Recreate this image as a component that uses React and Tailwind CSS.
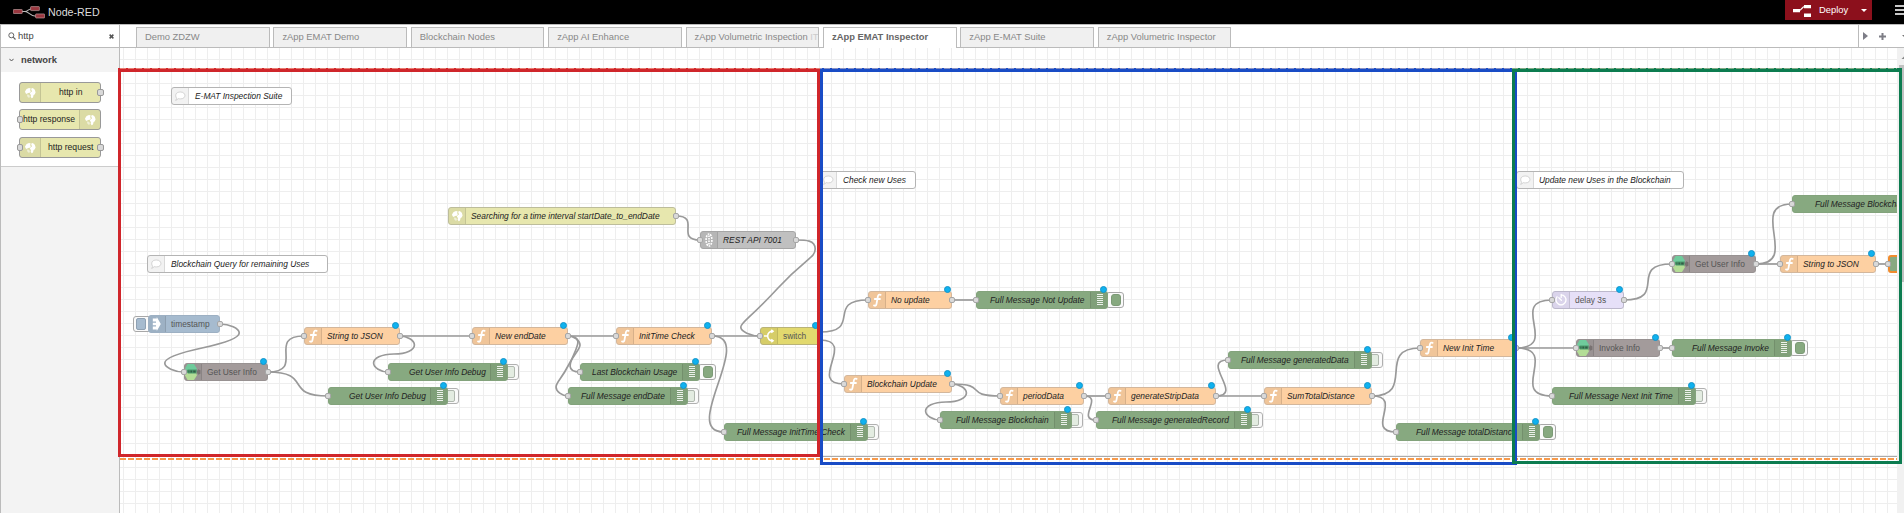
import React from "react";

const S = 0.6;
const OX = 120;
const OY = 48;

const KINDS = {
  fn: { bg: "bg-[#fdd0a2] border-[#d3b79c]", icon: "f" },
  debug: { bg: "bg-[#87a980] border-[#83a37c]", icon: "debug", right: true },
  inject: { bg: "bg-[#a6bbcf] border-[#9db0c3]", icon: "inject" },
  http: { bg: "bg-[#e7e7ae] border-[#bdbd9b]", icon: "globe" },
  rest: { bg: "bg-[#c0c0c0] border-[#a6a6a6]", icon: "burst" },
  sw: { bg: "bg-[#e2d96e] border-[#b9b377]", icon: "switch" },
  delay: { bg: "bg-[#e6e0f8] border-[#bcb8cc]", icon: "timer" },
  agent: { bg: "bg-[#a39b9b] border-[#989292]", icon: "hex" },
  comment: { bg: "bg-white border-[#b4b4b4]", icon: "comment" },
};

// kind, left, top, width, label, label left, options
const NODES = [
  ["comment", 171, 87, 121, "E-MAT Inspection Suite", 195],
  ["comment", 819, 171, 97, "Check new Uses", 843],
  ["comment", 1516, 171, 168, "Update new Uses in the Blockchain", 1539],
  ["comment", 147, 255, 181, "Blockchain Query for remaining Uses", 171],
  ["http", 448, 207, 228, "Searching for a time interval startDate_to_endDate", 471, { i: 0, o: 1 }],
  ["rest", 700, 231, 96, "REST API 7001", 723, { i: 1, o: 1 }],
  ["inject", 148, 315, 72, "timestamp", 171, { o: 1, plain: 1 }],
  ["agent", 184, 363, 84, "Get User Info", 207, { i: 1, o: 1, dot: 1, plain: 1 }],
  ["fn", 304, 327, 96, "String to JSON", 327, { i: 1, o: 1, dot: 1 }],
  ["debug", 388, 363, 120, "Get User Info Debug", 409, { i: 1, dot: 1, btn: "off" }],
  ["debug", 328, 387, 120, "Get User Info Debug", 349, { i: 1, dot: 1, btn: "off" }],
  ["fn", 472, 327, 96, "New endDate", 495, { i: 1, o: 1, dot: 1 }],
  ["fn", 616, 327, 96, "InitTime Check", 639, { i: 1, o: 1, dot: 1 }],
  ["sw", 760, 327, 60, "switch", 783, { i: 1, o: 2, dot: 1, plain: 1 }],
  ["debug", 580, 363, 120, "Last Blockchain Usage", 592, { i: 1, dot: 1, btn: "on" }],
  ["debug", 568, 387, 120, "Full Message endDate", 581, { i: 1, dot: 1, btn: "off" }],
  ["debug", 724, 423, 144, "Full Message InitTime Check", 737, { i: 1, dot: 1, btn: "off" }],
  ["fn", 868, 291, 84, "No update", 891, { i: 1, o: 1, dot: 1 }],
  ["debug", 976, 291, 132, "Full Message Not Update", 990, { i: 1, dot: 1, btn: "on" }],
  ["fn", 844, 375, 108, "Blockchain Update", 867, { i: 1, o: 1, dot: 1 }],
  ["fn", 1000, 387, 84, "periodData", 1023, { i: 1, o: 1, dot: 1 }],
  ["fn", 1108, 387, 108, "generateStripData", 1131, { i: 1, o: 1, dot: 1 }],
  ["debug", 940, 411, 132, "Full Message Blockchain", 956, { i: 1, dot: 1, btn: "off" }],
  ["debug", 1096, 411, 156, "Full Message generatedRecord", 1112, { i: 1, dot: 1, btn: "off" }],
  ["debug", 1228, 351, 144, "Full Message generatedData", 1241, { i: 1, dot: 1, btn: "off" }],
  ["fn", 1264, 387, 108, "SumTotalDistance", 1287, { i: 1, o: 1, dot: 1 }],
  ["fn", 1420, 339, 96, "New Init Time", 1443, { i: 1, o: 1, dot: 1 }],
  ["debug", 1396, 423, 144, "Full Message totalDistance", 1416, { i: 1, dot: 1, btn: "on" }],
  ["delay", 1552, 291, 72, "delay 3s", 1575, { i: 1, o: 1, dot: 1, plain: 1 }],
  ["agent", 1576, 339, 84, "Invoke Info", 1599, { i: 1, o: 1, dot: 1, plain: 1 }],
  ["debug", 1672, 339, 120, "Full Message Invoke", 1692, { i: 1, dot: 1, btn: "on" }],
  ["debug", 1552, 387, 144, "Full Message Next Init Time", 1569, { i: 1, dot: 1, btn: "off" }],
  ["agent", 1672, 255, 84, "Get User Info", 1695, { i: 1, o: 1, dot: 1, plain: 1 }],
  ["fn", 1780, 255, 96, "String to JSON", 1803, { i: 1, o: 1, dot: 1 }],
  ["debug", 1792, 195, 144, "Full Message Blockchain", 1815, { i: 1 }],
  ["debug", 1888, 255, 120, "", 1905, { i: 1, selected: 1 }],
];

const WIRES = [
  [676, 216, 700, 240],
  [796, 240, 760, 336],
  [220, 324, 184, 372],
  [268, 372, 304, 336],
  [268, 372, 328, 396],
  [400, 336, 472, 336],
  [400, 336, 388, 372],
  [568, 336, 616, 336],
  [568, 336, 580, 372],
  [568, 336, 568, 396],
  [712, 336, 760, 336],
  [712, 336, 724, 432],
  [820, 332, 868, 300],
  [820, 340, 844, 384],
  [952, 300, 976, 300],
  [952, 384, 1000, 396],
  [952, 384, 940, 420],
  [1084, 396, 1108, 396],
  [1084, 396, 1096, 420],
  [1216, 396, 1228, 360],
  [1216, 396, 1264, 396],
  [1372, 396, 1420, 348],
  [1372, 396, 1396, 432],
  [1516, 348, 1552, 300],
  [1516, 348, 1576, 348],
  [1516, 348, 1552, 396],
  [1624, 300, 1672, 264],
  [1660, 348, 1672, 348],
  [1756, 264, 1792, 204],
  [1756, 264, 1780, 264],
  [1876, 264, 1888, 264],
];

function wirePath([ax, ay, bx, by]) {
  const [x0, y0, x1, y1] = [ax, ay, bx, by].map((v) => v / S);
  const W = 100;
  const dx = x1 - x0;
  const dy = y1 - y0;
  if (dx > 0) {
    const d = Math.hypot(dx, dy);
    const k = d < W ? 0.75 - 0.75 * ((W - d) / W) : 0.75;
    return `M${x0} ${y0}C${x0 + W * k} ${y0} ${x1 - W * k} ${y1} ${x1} ${y1}`;
  }
  const k = 0.4 - 0.2 * Math.max(0, (W - Math.min(Math.abs(dx), Math.abs(dy))) / W);
  const h = 15;
  const mx = x1 - dx / 2;
  const my = y1 - dy / 2;
  const ym = (y1 + my) / 2;
  const tx = x0 + W * k;
  const ty = Math.min(ym - dy / 2, y0 + h);
  const ex = x1 - W * k;
  const ey = Math.max(ym, y1 - h);
  const cx = (x0 + tx) / 2;
  const cp = [
    [cx, y0],
    [tx, Math.max(y0, ty - h)],
    [cx, Math.min(my, ty + h)],
    [ex, Math.max(my, ey - h)],
    [(x1 + ex) / 2, y1],
  ];
  if (cp[2][1] === ty + h) {
    if (Math.abs(dy) < h * 10) cp[1][1] = ty - h / 2;
    cp[3][1] = ey - h / 2;
  }
  return `M${x0} ${y0}C${cp[0]} ${cp[1]} ${tx} ${ty}S${cp[2]} ${mx} ${my}S${cp[3]} ${ex} ${ey}S${cp[4]} ${x1} ${y1}`;
}

function Globe() {
  return (
    <g fill="#fff">
      <path d="M4 7.400 5.600 4.900 8 4 9.800 4.600 9 6.200 10 7 8.800 8.800 7 9 5.800 10 4.600 9.200Z" />
      <path d="M10 4.800 11.800 4 13.800 5.800 14.600 8.600 13.600 10.600 12.600 11 12 13.400 10.600 14.200 9.600 12.600 10 11 8.800 9.800 9.600 8.200 11 7.600Z" />
      <path d="M5.800 10.600 8 10.800 9 12.200 8.200 14 6.600 13Z" opacity=".55" />
    </g>
  );
}

function Icon({ name }) {
  const art = {
    f: (
      <path d="M12.600 3.900C11.200 3.100 10.200 3.800 9.900 5.400L8.500 12.800C8.200 14.500 7.400 15.200 6 14.400M6.800 8H12" fill="none" stroke="#fff" strokeWidth="1.8" strokeLinecap="round" />
    ),
    debug: (
      <path d="M6 3.500h6M6 5.500h6M6 7.500h6M6 9.500h6M6 11.500h6M6 13.500h6" stroke="#fff" strokeOpacity=".85" strokeWidth="1" />
    ),
    inject: <path d="M4.800 3.600h4V2L12.800 9 8.800 16v-1.600h-4v-3H8v-1.200H4.800V7.800H8V6.600H4.800Z" fill="#fff" />,
    globe: <Globe />,
    burst: (
      <g fill="none" stroke="#fff">
        <ellipse cx="9" cy="9" rx="2.900" ry="6" strokeWidth="1.600" strokeDasharray="1.800 1" />
        <path d="M9 4.500v9" strokeWidth="1.600" strokeDasharray="1.500 1" />
      </g>
    ),
    switch: (
      <path d="M4 9h3.600M7.600 9C8 5.400 9.400 4.200 12.600 4.200M7.600 9c.4 3.600 1.800 4.800 5 4.800M11.200 2.800l1.800 1.400-1.800 1.400M11.200 12.400l1.800 1.400-1.800 1.400" fill="none" stroke="#fff" strokeWidth="1.600" />
    ),
    timer: (
      <path d="M9.200 3.400v3M9.200 3.800a5 5 0 1 1-4.200 2M6.800 6.800l2.600 2.400" fill="none" stroke="#fff" strokeWidth="1.300" strokeLinecap="round" />
    ),
    hex: (
      <g>
        <path d="M3.600 1h6.400l2.800 4.500V9H1V5.500Z" fill="#6fcb9c" />
        <path d="M1 9h11.800v3.500L10 17H3.600L1 12.500Z" fill="#b3dd96" />
        <path d="M1.500 7.800 4 6.600h8.500v3.800H4Z" fill="#4b9a6c" />
        <path d="M4.400 7.500h1v2h-1zM6.400 7.500h1.800v2H6.400zM9.200 7.500h2.400v2H9.200z" fill="#2c4f3c" opacity=".8" />
        <path d="M12.600 6.200 14 8v-1.800l2.400 1v3.600l-2.400 1V10l-1.400 1.600Z" fill="#6d6666" opacity=".75" />
      </g>
    ),
    comment: (
      <path d="M5.600 11.300C3.600 8 5 5 9.400 5c5.800 0 6.200 6.900 0 6.900-1 0-1.500-.1-2.200-.3C6.400 12.600 5.500 13.200 4.600 13.300c.6-.6.9-1.200 1-2Z" fill="#fff" stroke="#c4c4c4" strokeWidth=".7" />
    ),
  };
  return (
    <svg className="block h-[18px] w-[18px]" viewBox="0 0 18 18">
      {art[name]}
    </svg>
  );
}

function Port({ x, y }) {
  return (
    <span
      className="absolute h-[6px] w-[6px] rounded-[2px] border border-[#a6a6a6] bg-[#d9d9d9]"
      style={{ left: x - 3, top: y - 3 }}
    />
  );
}

function FlowNode({ data }) {
  const [kind, x, y, w, label, tx, o = {}] = data;
  const k = KINDS[kind];
  const comment = kind === "comment";
  return (
    <div className="absolute h-[18px]" style={{ left: x - OX, top: y - OY, width: w }}>
      {o.btn === "off" && (
        <span className="absolute top-[1px] h-[16px] w-[16px] rounded-[3px] border border-[#b0b0b0] bg-[#fafafa]" style={{ left: w - 5 }}>
          <span className="absolute left-[1px] top-[1px] h-[12px] w-[10px] rounded-[2px] border border-[#b0b8af] bg-[#e3ece1]" />
        </span>
      )}
      {o.btn === "on" && (
        <span className="absolute top-[1px] h-[16px] w-[18px] rounded-[3px] border border-[#a8a8a8] bg-[#fafafa]" style={{ left: w - 2 }}>
          <span className="absolute left-[4px] top-[1px] h-[12px] w-[10px] rounded-[3px] border border-[#7c9a76] bg-[#87a980]" />
        </span>
      )}
      {kind === "inject" && (
        <span className="absolute -left-[15px] top-[1px] h-[16px] w-[18px] rounded-[3px] border border-[#a8a8a8] bg-[#fafafa]">
          <span className="absolute left-[2px] top-[1px] h-[12px] w-[10px] rounded-[2px] border border-[#8fa1b3] bg-[#a6bbcf]" />
        </span>
      )}
      <div
        className={`absolute inset-0 overflow-hidden rounded-[3px] ${o.selected ? "border-2 border-[#f08c2e] bg-[#87a980]" : "border " + k.bg}`}
      >
        {!o.selected && (
          <div
            className={`absolute -top-px h-[18px] w-[18px] bg-black/5 ${k.right ? "-right-px border-l border-black/10" : "-left-px border-r border-black/10"}`}
          >
            <Icon name={k.icon} />
          </div>
        )}
      </div>
      <span
        className={`absolute top-0 whitespace-nowrap text-[8.4px] leading-[18px] ${o.plain ? "text-[#555]" : "italic text-[#222]"} ${comment ? "text-[#111]" : ""}`}
        style={{ left: tx - x }}
      >
        {label}
      </span>
      {o.i === 1 && <Port x={0} y={9} />}
      {o.o === 1 && <Port x={w} y={9} />}
      {o.o === 2 && <Port x={w} y={5} />}
      {o.o === 2 && <Port x={w} y={13} />}
      {o.dot && (
        <span className="absolute -top-[5px] h-[7px] w-[7px] rounded-full border border-[#1493c8] bg-[#0fb2ef]" style={{ left: w - 8 }} />
      )}
    </div>
  );
}

const TABS = [
  "Demo ZDZW",
  "zApp EMAT Demo",
  "Blockchain Nodes",
  "zApp AI Enhance",
  "zApp Volumetric Inspection IT",
  "zApp EMAT Inspector",
  "zApp E-MAT Suite",
  "zApp Volumetric Inspector",
];

function Header() {
  return (
    <header className="flex h-6 shrink-0 items-start justify-between bg-black">
      <div className="flex h-6 items-center pl-[13px]">
        <svg className="h-[13px] w-8" viewBox="0 0 32 13">
          <path d="M9 5.500h3c3 0 3.500-2.800 7-2.800M12 5.500c4 0 4.500 4.700 11 4.700" fill="none" stroke="#bbb" strokeWidth="1.100" />
          <g fill="#9a3840" stroke="#c9a9a9" strokeWidth=".6">
            <rect x=".3" y="3.500" width="9" height="4" rx=".6" />
            <rect x="17.600" y=".6" width="8.800" height="4" rx=".6" />
            <rect x="22.600" y="7.900" width="9" height="4.100" rx=".6" />
          </g>
        </svg>
        <span className="ml-[3px] text-[10.7px] leading-none text-[#ddd]">Node-RED</span>
      </div>
      <div className="flex h-5 items-start">
        <div className="flex h-5 w-[87px] items-center bg-[#8c101c] pl-2 text-white">
          <svg className="mt-[2px] h-3 w-[18px]" viewBox="0 0 18 12">
            <path d="M5 5.500c5 0 3-4 7-4" fill="none" stroke="#fff" strokeWidth="1.200" />
            <path d="M0 4h7v3.200H0zM11 0h7v3.200h-7zM11 8.500h7v3.400h-7z" fill="#fff" />
          </svg>
          <span className="ml-2 w-[42px] text-[9.4px] leading-none">Deploy</span>
          <span className="h-0 w-0 border-x-[3px] border-t-[3.500px] border-x-transparent border-t-white" />
        </div>
        <div className="ml-[23px] mt-[5px] flex w-[9px] flex-col gap-[2px]">
          <span className="h-[2px] bg-[#c7c7c7]" />
          <span className="h-[2px] bg-[#c7c7c7]" />
          <span className="h-[2px] bg-[#c7c7c7]" />
        </div>
      </div>
    </header>
  );
}

function PaletteNode({ label, left, right, iconRight, pad }) {
  return (
    <div className="relative flex h-[21px] w-[82px] items-center rounded-[3px] border border-[#999] bg-[#e7e7ae]">
      <div className={`absolute inset-y-0 flex w-[21px] items-center justify-center bg-black/5 ${iconRight ? "right-0 border-l border-black/10" : "left-0 border-r border-black/10"}`}>
        <svg className="h-[18px] w-[18px]" viewBox="0 0 18 18">
          <Globe />
        </svg>
      </div>
      <span className={`relative whitespace-nowrap pb-px text-[8.6px] leading-none text-[#222] ${pad}`}>{label}</span>
      {left && <span className="absolute -left-[3px] top-[6px] h-[7px] w-[6px] rounded-[2px] border border-[#999] bg-[#d9d9d9]" />}
      {right && <span className="absolute -right-[4px] top-[6px] h-[7px] w-[7px] rounded-[2px] border border-[#999] bg-[#d9d9d9]" />}
    </div>
  );
}

function Palette() {
  return (
    <aside className="flex w-[120px] shrink-0 flex-col border-l border-r border-[#bbb] bg-[#f3f3f3]">
      <div className="flex h-[23px] shrink-0 items-center border-b border-[#bbb] bg-white pl-[7px] pr-[5px]">
        <svg className="h-[8px] w-[8px]" viewBox="0 0 8 8">
          <circle cx="3.300" cy="3.300" r="2.500" fill="none" stroke="#666" />
          <path d="m5.200 5.200 2.300 2.300" stroke="#666" strokeWidth="1.200" />
        </svg>
        <span className="ml-[2px] flex-1 text-[9.4px] leading-none text-[#444]">http</span>
        <svg className="h-[5px] w-[5px]" viewBox="0 0 5 5">
          <path d="m.6.600 3.800 3.800M4.400.6.600 4.400" stroke="#555" strokeWidth="1.500" />
        </svg>
      </div>
      <div className="flex h-[24px] shrink-0 items-center pl-2">
        <svg className="h-1 w-[5px]" viewBox="0 0 5 4">
          <path d="M.4.800 2.500 3 4.600.8" fill="none" stroke="#555" />
        </svg>
        <span className="ml-[7px] pb-px text-[9.4px] font-bold leading-none text-[#444]">network</span>
      </div>
      <div className="flex h-[95px] shrink-0 flex-col gap-[6px] border-b border-[#ccc] bg-white pl-[18px] pt-[10px]">
        <PaletteNode label="http in" right pad="pl-[39px]" />
        <PaletteNode label="http response" left iconRight pad="pl-[3px]" />
        <div className="pt-px">
          <PaletteNode label="http request" left right pad="pl-[28px]" />
        </div>
      </div>
    </aside>
  );
}

function TabBar() {
  return (
    <div className="flex h-[23px] shrink-0 border-b border-[#bbb] bg-white">
      <div className="flex flex-1 items-end gap-[3.800px] pl-4">
        {TABS.map((t, i) => (
          <div
            key={t}
            className={`flex w-[133.600px] shrink-0 items-center overflow-hidden whitespace-nowrap border-x border-t border-[#bbb] pl-[8px] text-[9.400px] leading-none ${i === 5 ? "-mb-px h-[21px] bg-white pb-[3px] font-bold text-[#666]" : "h-[20px] bg-[#f0f0f0] pb-[2px] text-[#888]"}`}
          >
            {i === 4 ? (
              <span>
                zApp Volumetric Inspection <span className="text-[#ccc]">IT</span>
              </span>
            ) : (
              t
            )}
          </div>
        ))}
      </div>
      <div className="flex w-[46px] items-center overflow-hidden border-l border-[#bbb] pl-[4px]">
        <span className="h-0 w-0 shrink-0 border-y-[4.500px] border-l-[5px] border-y-transparent border-l-[#7d7d87]" />
        <svg className="ml-[11px] h-[7px] w-[7px] shrink-0" viewBox="0 0 7 7">
          <path d="M3.500 0v7M0 3.500h7" stroke="#7d7d85" strokeWidth="2" />
        </svg>
        <span className="ml-[16px] h-0 w-0 shrink-0 border-x-[3px] border-t-[3px] border-x-transparent border-t-[#777]" />
      </div>
    </div>
  );
}

function Canvas() {
  return (
    <div className="flex min-h-0 flex-1">
      <div className="relative w-[1777px] shrink-0 overflow-hidden bg-white bg-[linear-gradient(#eeeeee_1px,transparent_1px),linear-gradient(90deg,#eeeeee_1px,transparent_1px)] bg-[length:12px_12px] bg-[position:3px_11px]">
        <svg className="absolute inset-0 h-[465px] w-[1777px]" viewBox="120 48 1777 465">
          <path d="M120 456.500H1897" stroke="#aaa" strokeWidth="1" />
          <path d="M120 459H1897" stroke="#f79a4c" strokeWidth="2" strokeDasharray="6 2" />
          <g transform="scale(0.6)" fill="none" stroke="#999" strokeWidth="2.800">
            {WIRES.map((w, i) => (
              <path key={i} d={wirePath(w)} />
            ))}
          </g>
        </svg>
        {NODES.map((n, i) => (
          <FlowNode key={i} data={n} />
        ))}
      </div>
      <div className="flex flex-1 flex-col items-end overflow-hidden bg-[#f1f1f1]">
        <svg className="h-[17px] w-[7px] shrink-0" viewBox="0 0 7 17">
          <path d="M4.500 11 8 7.500V11Z" fill="#888" />
        </svg>
        <div className="h-[217px] w-[5px] bg-[#c1c1c1]" />
      </div>
    </div>
  );
}

export default function App() {
  return (
    <div className="relative flex h-[513px] w-[1904px] flex-col overflow-hidden bg-white font-['Liberation_Sans',Arial,sans-serif]">
      <Header />
      <div className="flex min-h-0 flex-1 border-t border-[#bbb]">
        <Palette />
        <main className="flex min-w-0 flex-1 flex-col">
          <TabBar />
          <Canvas />
        </main>
      </div>
      <div className="pointer-events-none absolute left-[118px] top-[68px] h-[389px] w-[702px] border-[3px] border-t-4 border-[#d0262b]" />
      <div className="pointer-events-none absolute left-[820px] top-[68px] h-[397px] w-[697px] border-[3px] border-t-4 border-[#194cc6]" />
      <div className="pointer-events-none absolute left-[1512px] top-[68px] h-[396px] w-[390px] border-[3px] border-t-4 border-[#0c7c50]" />
      <svg className="pointer-events-none absolute left-[120px] top-[68px] h-px w-[1777px]" viewBox="0 0 1777 1">
        <path d="M0 .5H1777" stroke="#ffd9bd" strokeOpacity=".5" strokeDasharray="6 2" />
      </svg>
    </div>
  );
}
